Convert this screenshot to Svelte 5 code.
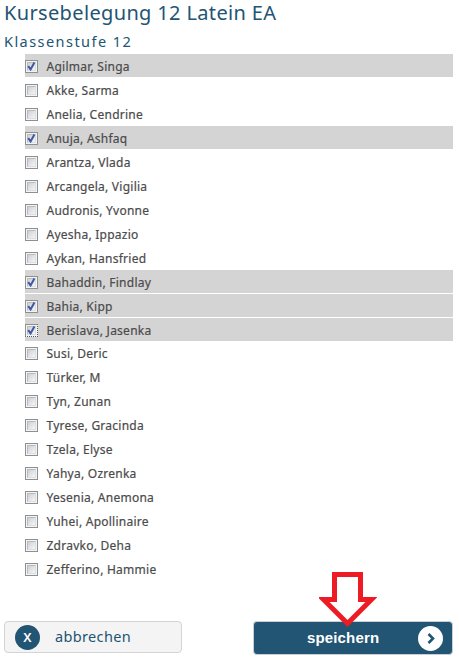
<script>
  const first = [
    ['Agilmar, Singa', true], ['Akke, Sarma'], ['Anelia, Cendrine'], ['Anuja, Ashfaq', true],
    ['Arantza, Vlada'], ['Arcangela, Vigilia'], ['Audronis, Yvonne'], ['Ayesha, Ippazio'],
    ['Aykan, Hansfried'], ['Bahaddin, Findlay', true], ['Bahia, Kipp', true],
    ['Berislava, Jasenka', true, true], ['Susi, Deric'], ['Türker, M'], ['Tyn, Zunan'],
    ['Tyrese, Gracinda'], ['Tzela, Elyse'], ['Yahya, Ozrenka'], ['Yesenia, Anemona'],
    ['Yuhei, Apollinaire'], ['Zdravko, Deha'], ['Zefferino, Hammie']
  ];
  let students = $state(first.map(([name, checked = false, focus = false]) => ({ name, checked, focus })));
</script>

<main>
  <h1>Kursebelegung 12 Latein EA</h1>
  <h2>Klassenstufe 12</h2>
  <ul>
    {#each students as s}
      <li class:on={s.checked} class:focus={s.focus}>
        <button class="row" role="checkbox" aria-checked={s.checked} onclick={() => (s.checked = !s.checked)}>
          <span class="box">
            <span class="inner">
              {#if s.checked}
                <svg width="9" height="9" viewBox="0 0 9 9"><path d="M1.2 4.2 3.6 7.4 7.4 .6" fill="none" stroke="#3f57a0" stroke-width="2" /></svg>
              {/if}
            </span>
          </span>
          <span class="name">{s.name}</span>
        </button>
      </li>
    {/each}
  </ul>
  <footer>
    <button class="cancel"><span class="disc">X</span><span class="label">abbrechen</span></button>
    <button class="save">
      <span class="label">speichern</span>
      <span class="disc"><svg width="25" height="25" viewBox="0 0 25 25"><path d="M10.5 8 15 12.5 10.5 17" fill="none" stroke="#225473" stroke-width="2.6" /></svg></span>
      <svg class="arrow" width="58" height="58" viewBox="0 0 58 58"><path d="M15.5 3.5H41.5V28.5H52.5L28.5 52.5 4.5 28.5H15.5Z" fill="#fff" stroke="#ed1c24" stroke-width="5" /></svg>
    </button>
  </footer>
</main>

<style>
  :global(body) { margin: 0; background: #fff; }
  main { box-sizing: border-box; width: 459px; height: 660px; padding: 0 6px 5px 4px; display: flex; flex-direction: column; overflow: hidden; font-family: "Noto Sans", sans-serif; color: #4b4b4b; }
  h1, h2 { margin: 0; font-weight: 400; color: #225473; white-space: nowrap; }
  h1 { font-size: 20px; line-height: 26px; height: 28px; letter-spacing: .35px; }
  h2 { font-size: 14.5px; line-height: 26px; height: 26px; letter-spacing: 1.45px; }
  ul { list-style: none; margin: 0 0 0 21px; padding: 0; }
  li { height: 23px; margin-bottom: 1px; }
  li.on { background: #d4d4d4; }
  li.focus { margin-bottom: 0; }
  button { font: inherit; color: inherit; border: 0; padding: 0; margin: 0; background: none; text-align: left; }
  .row { display: flex; align-items: center; width: 100%; height: 23px; padding-top: 2px; }
  .box { box-sizing: border-box; width: 13px; height: 13px; border: 1px solid #8e8f8f; background: #f4f4f4; padding: 1px; flex: none; }
  .focus .box { border-right: 1px dotted #555; border-bottom: 1px dotted #555; }
  .inner { box-sizing: border-box; display: block; width: 9px; height: 9px; border: 1px solid #b8bcc2; border-right-color: #dcdfe2; border-bottom-color: #dcdfe2; background: linear-gradient(135deg, #cbcfd5, #f6f6f6); }
  .inner svg { display: block; margin: -1px; }
  .name { margin-left: 8.5px; font-size: 12px; line-height: 20px; letter-spacing: .25px; white-space: nowrap; -webkit-text-stroke: .2px #4b4b4b; }
  footer { margin-top: auto; display: flex; justify-content: space-between; align-items: flex-end; }
  .cancel, .save { box-sizing: border-box; height: 34px; border-radius: 4px; display: flex; align-items: center; }
  .cancel { width: 178px; height: 32px; border: 1px solid #d4d4d4; background: #f4f4f4; padding-left: 10px; color: #225473; margin-bottom: 2px; }
  .disc { width: 25px; height: 25px; border-radius: 50%; display: flex; align-items: center; justify-content: center; flex: none; }
  .cancel .disc { background: #225473; color: #fff; font-size: 13px; font-weight: 600; }
  .cancel .label { margin-left: 15px; font-size: 14.5px; line-height: 20px; letter-spacing: .35px; position: relative; top: -1px; }
  .save { position: relative; width: 200px; border: 1px solid #c8d0d6; background: #225473; color: #fff; padding: 0 9px 0 53px; justify-content: space-between; }
  .save .label { font: 700 15px/20px "Liberation Sans", Arial, sans-serif; letter-spacing: .15px; }
  .save .disc { background: #fff; }
  .arrow { position: absolute; left: 65px; top: -51px; }
</style>
